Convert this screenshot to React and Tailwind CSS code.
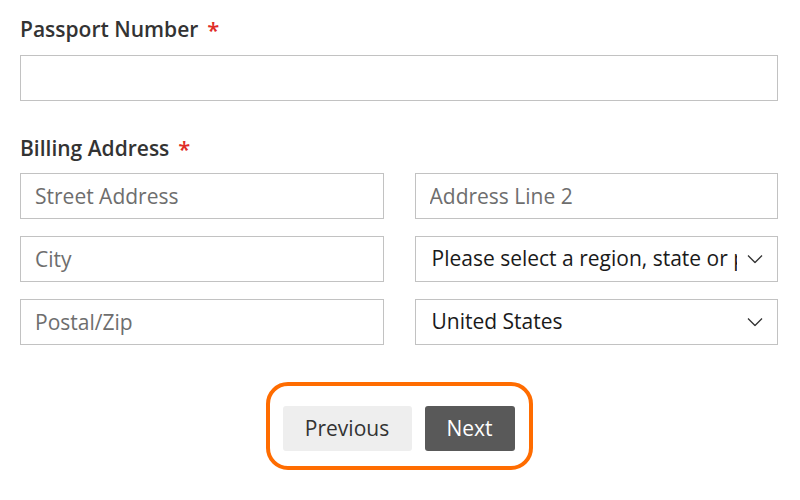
import React from "react";

const Chevron = () => (
  <svg
    className="pointer-events-none absolute right-[15px] top-1/2 -translate-y-1/2"
    width="16"
    height="9"
    viewBox="0 0 16 9"
    fill="none"
  >
    <path d="M1 1l7 7 7-7" stroke="#333" strokeWidth="1.3" />
  </svg>
);

const inputClass =
  "h-[46px] w-full border border-[#c2c2c2] bg-white px-[14px] text-[21px] text-[#333] outline-none placeholder:text-[#6e6e6e]";

const Select = ({ children }) => (
  <div className="relative">
    <select className="h-[46px] w-full appearance-none border border-[#c2c2c2] bg-white pl-[16px] pr-[40px] text-[21px] text-[#1a1a1a] outline-none">
      {children}
    </select>
    <Chevron />
  </div>
);

const Label = ({ children }) => (
  <label className="block h-[27px] text-[21px] font-semibold leading-[27px] text-[#333]">
    {children}
    <span className="ml-[9px] align-top text-[22px] leading-[27px] text-[#e02b27]">*</span>
  </label>
);

export default function App() {
  return (
    <div
      className="h-[500px] w-[800px] bg-white pl-[20px] pt-[16px]"
      style={{ fontFamily: '"Open Sans", sans-serif' }}
    >
      <div className="w-[758px]">
        <div className="flex flex-col gap-[12px]">
          <Label>Passport Number</Label>
          <input className={inputClass} />
        </div>

        <div className="mt-[34px] flex flex-col gap-[11px]">
          <Label>Billing Address</Label>
          <div className="grid grid-cols-2 gap-x-[31px] gap-y-[17px]">
            <input className={inputClass} placeholder="Street Address" />
            <input className={inputClass} placeholder="Address Line 2" />
            <input className={inputClass} placeholder="City" />
            <Select>
              <option>Please select a region, state or province.</option>
            </Select>
            <input className={inputClass} placeholder="Postal/Zip" />
            <Select>
              <option>United States</option>
            </Select>
          </div>
        </div>

        <div className="mt-[37px] flex justify-center">
          <div className="flex gap-[13px] rounded-[22px] border-4 border-[#ff6c00] pb-[15px] pl-[13px] pr-[14px] pt-[20px]">
            <button className="h-[45px] w-[129px] rounded-[3px] bg-[#eeeeee] text-[21px] text-[#333]">
              Previous
            </button>
            <button className="h-[45px] w-[90px] rounded-[3px] bg-[#595959] text-[21px] text-white">
              Next
            </button>
          </div>
        </div>
      </div>
    </div>
  );
}
